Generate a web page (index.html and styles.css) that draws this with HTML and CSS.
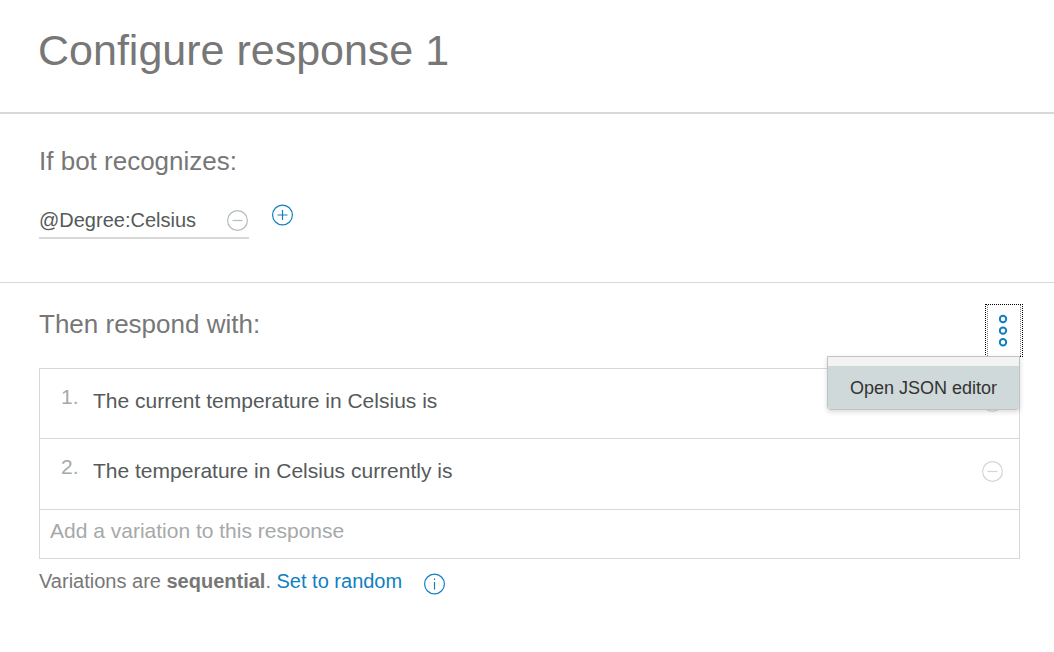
FILE: index.html
```html
<!DOCTYPE html>
<html lang="en">
<head>
<meta charset="utf-8">
<meta name="viewport" content="width=device-width, initial-scale=1">
<title>Configure response 1</title>
<link rel="stylesheet" href="styles.css">
</head>
<body>
<header class="page-header">
  <h1 class="page-title">Configure response 1</h1>
</header>
<main>
  <section class="section conditions">
    <h2 class="section-title">If bot recognizes:</h2>
    <div class="condition-row">
      <div class="condition">
        <input class="condition-input" type="text" value="@Degree:Celsius" aria-label="Condition">
        <button class="icon-button icon-remove" type="button" aria-label="Remove condition">
          <svg class="icon" viewBox="0 0 22 22"><circle cx="10.5" cy="11.5" r="9.9"/><path d="M5.5 11.5h10"/></svg>
        </button>
      </div>
      <button class="icon-button icon-add" type="button" aria-label="Add condition">
        <svg class="icon" viewBox="0 0 22 22"><circle cx="10.5" cy="11" r="9.9"/><path d="M5.5 11h10M10.5 6v10"/></svg>
      </button>
    </div>
  </section>
  <section class="section responses">
    <div class="responses-header">
      <h2 class="section-title">Then respond with:</h2>
      <div class="menu-anchor">
        <button class="menu-toggle" type="button" aria-label="More options" aria-expanded="true">
          <span class="menu-toggle-inner">
            <svg class="dots" viewBox="0 0 10 34"><circle cx="4" cy="5" r="3.2"/><circle cx="4" cy="16.6" r="3.2"/><circle cx="4" cy="28.2" r="3.2"/></svg>
          </span>
        </button>
        <div class="menu">
          <button class="menu-item" type="button">Open JSON editor</button>
        </div>
      </div>
    </div>
    <ol class="variation-list">
      <li class="variation">
        <span class="variation-number">1.</span>
        <input class="variation-input" type="text" value="The current temperature in Celsius is" aria-label="Variation 1">
        <button class="icon-button icon-remove-light" type="button" aria-label="Remove variation 1">
          <svg class="icon" viewBox="0 0 22 22"><circle cx="11.5" cy="11.5" r="9.9"/><path d="M6.5 11.5h10"/></svg>
        </button>
      </li>
      <li class="variation">
        <span class="variation-number">2.</span>
        <input class="variation-input" type="text" value="The temperature in Celsius currently is" aria-label="Variation 2">
        <button class="icon-button icon-remove-light" type="button" aria-label="Remove variation 2">
          <svg class="icon" viewBox="0 0 22 22"><circle cx="11.5" cy="11.5" r="9.9"/><path d="M6.5 11.5h10"/></svg>
        </button>
      </li>
      <li class="variation-new">
        <input class="variation-input" type="text" placeholder="Add a variation to this response" aria-label="Add a variation to this response">
      </li>
    </ol>
    <div class="mode">
      <p class="mode-text">Variations are <strong>sequential</strong>. <a class="mode-link" href="#">Set to random</a></p>
      <button class="icon-button icon-info" type="button" aria-label="About variations">
        <svg class="icon" viewBox="0 0 22 22"><circle cx="10.5" cy="11" r="9.9"/><path d="M10.5 9v7.500M10.5 5.500v1.500"/></svg>
      </button>
    </div>
  </section>
</main>
</body>
</html>
```
FILE: styles.css
```css
* {
  box-sizing: border-box;
}

body {
  margin: 0;
  background: #fff;
  color: #777;
  font-family: "Liberation Sans", Arial, sans-serif;
  font-size: 20px;
  line-height: 24px;
}

h1,
h2,
p,
ol {
  margin: 0;
  padding: 0;
  font-weight: 400;
}

input,
button {
  margin: 0;
  padding: 0;
  border: 0;
  background: none;
  font: inherit;
  color: inherit;
}

button {
  cursor: pointer;
}

.page-header {
  padding: 24px 34px 36px 38px;
  border-bottom: 2px solid #d8d8d8;
}

.page-title {
  font-size: 43px;
  line-height: 52px;
}

.section {
  padding-left: 39px;
  padding-right: 34px;
}

.section-title {
  font-size: 26px;
  line-height: 32px;
}

.conditions {
  padding-top: 31px;
  padding-bottom: 43px;
  border-bottom: 1px solid #d8d8d8;
}

.condition-row {
  display: flex;
  align-items: flex-start;
  gap: 23px;
  margin-top: 27px;
}

.condition {
  display: flex;
  align-items: center;
  width: 210px;
  padding: 4px 0 5px;
  border-bottom: 2px solid #d8d8d8;
}

.condition-input {
  flex: 1;
  min-width: 0;
  height: 24px;
  color: #555a5a;
}

.icon-button {
  flex: none;
  width: 22px;
  height: 22px;
}

.icon {
  display: block;
  width: 22px;
  height: 22px;
  fill: none;
  stroke: currentColor;
  stroke-width: 1.2;
}

.icon-remove {
  color: #b4bbbb;
}

.icon-add,
.icon-info {
  color: #0f80c1;
}

.icon-remove-light {
  margin-top: 1px;
  color: #d3d6d6;
}

.responses {
  padding-top: 21px;
}

.responses-header {
  display: flex;
  justify-content: space-between;
  align-items: flex-start;
}

.responses-header .section-title {
  padding-top: 4px;
}

.menu-anchor {
  position: relative;
  margin-right: -3px;
}

.menu-toggle {
  display: flex;
  width: 38px;
  height: 53px;
  padding: 0 1px;
  border: 1px dotted #000;
}

.menu-toggle-inner {
  flex: 1;
  display: flex;
  justify-content: center;
  height: 51px;
  padding-top: 9px;
  border: 0 dotted #777;
  border-width: 0 1px;
}

.dots {
  width: 10px;
  height: 34px;
  fill: none;
  stroke: #0f80c1;
  stroke-width: 2;
}

.menu {
  position: absolute;
  top: 52px;
  right: 3px;
  width: 193px;
  padding-top: 9px;
  border: 1px solid #bfc3c3;
  border-radius: 0 0 4px 4px;
  background: #f3f3f3;
  box-shadow: 0 2px 5px rgba(0, 0, 0, 0.15);
}

.menu-item {
  display: block;
  width: 100%;
  padding: 10px 20px 9px;
  border-radius: 0 0 3px 3px;
  background: #cfd9d9;
  color: #333;
  font-size: 18px;
  line-height: 24px;
  white-space: nowrap;
}

.variation-list {
  margin-top: 11px;
  border: 1px solid #d8d8d8;
  list-style: none;
  font-size: 21px;
}

.variation {
  display: flex;
  align-items: flex-start;
  padding: 20px 16px 25px 21px;
  border-bottom: 1px solid #d8d8d8;
}

.variation + .variation {
  padding-bottom: 26px;
}

.variation-number {
  width: 32px;
  margin-top: -4px;
  color: #a6a9a9;
}

.variation-input {
  flex: 1;
  min-width: 0;
  height: 24px;
  color: #555a5a;
}

.variation-input::placeholder {
  color: #a6a9a9;
  opacity: 1;
}

.variation-new {
  display: flex;
  padding: 9px 10px 15px;
}

.mode {
  display: flex;
  align-items: flex-start;
  gap: 22px;
  padding-top: 10px;
}

.mode-link {
  color: #0f80c1;
  text-decoration: none;
}

.icon-info {
  margin-top: 4px;
}
```
